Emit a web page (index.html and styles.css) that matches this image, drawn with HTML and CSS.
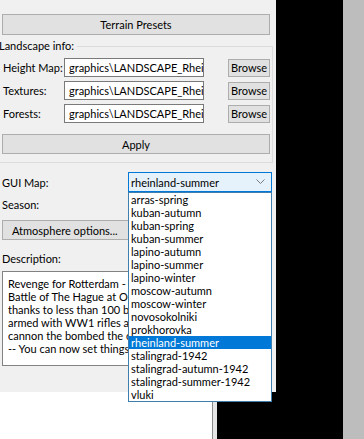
FILE: index.html
```html
<!DOCTYPE html>
<html>
<head>
  <title>Landscape settings</title>
  <link rel="stylesheet" href="styles.css">
</head>
<body>
  <div class="screen">
    <div class="left">
      <div class="panel">
        <button type="button" class="btn wide presets">Terrain Presets</button>

        <div class="group">
          <div class="legend">Landscape info:</div>
          <div class="row">
            <label>Height Map:</label>
            <div class="field">graphics\LANDSCAPE_Rheinland\height.tga</div>
            <button type="button" class="btn browse">Browse</button>
          </div>
          <div class="row">
            <label>Textures:</label>
            <div class="field">graphics\LANDSCAPE_Rheinland\textures.ini</div>
            <button type="button" class="btn browse">Browse</button>
          </div>
          <div class="row">
            <label>Forests:</label>
            <div class="field">graphics\LANDSCAPE_Rheinland\forests.tga</div>
            <button type="button" class="btn browse">Browse</button>
          </div>
          <button type="button" class="btn wide apply">Apply</button>
        </div>

        <div class="combo-row">
          <label>GUI Map:</label>
          <div class="combo">
            <span class="combo-text">rheinland-summer</span>
            <svg class="chevron" width="9" height="6" viewBox="0 0 9 6"><path d="M0.5 0.5 L4.5 4.5 L8.5 0.5" fill="none" stroke="#7a7a7a" stroke-width="1"/></svg>
            <ul class="list">
              <li>arras-spring</li>
              <li>kuban-autumn</li>
              <li>kuban-spring</li>
              <li>kuban-summer</li>
              <li>lapino-autumn</li>
              <li>lapino-summer</li>
              <li>lapino-winter</li>
              <li>moscow-autumn</li>
              <li>moscow-winter</li>
              <li>novosokolniki</li>
              <li>prokhorovka</li>
              <li class="selected">rheinland-summer</li>
              <li>stalingrad-1942</li>
              <li>stalingrad-autumn-1942</li>
              <li>stalingrad-summer-1942</li>
              <li>vluki</li>
            </ul>
          </div>
        </div>

        <div class="label season">Season:</div>
        <button type="button" class="btn atmos">Atmosphere options...</button>
        <div class="label desc-label">Description:</div>
        <div class="desc">
          <div>Revenge for Rotterdam - the Luftwaffe's first defeat.</div>
          <div>Battle of The Hague at Ockenburg, Ypenburg and Valkenburg</div>
          <div>thanks to less than 100 battle-ready Dutch fighters, soldiers</div>
          <div>armed with WW1 rifles and a few anti-aircraft guns. The</div>
          <div>cannon the bombed the city in return, many died.</div>
          <div>-- You can now set things up in the mission editor.</div>
        </div>
      </div>
      <div class="bottom">
        <div class="white"></div>
        <div class="edge"></div>
      </div>
    </div>
    <div class="black"></div>
    <div class="strip"></div>
  </div>
</body>
</html>
```

FILE: styles.css
```css
body {
  margin: 0;
  padding: 0;
  background-color: #000000;
  font-family: Lato, "Liberation Sans", sans-serif;
  font-size: 11px;
  color: #000000;
  overflow: hidden;
}

.screen {
  display: flex;
  width: 364px;
  height: 439px;
  overflow: hidden;
}

.left {
  width: 276px;
  display: flex;
  flex-direction: column;
  position: relative;
  z-index: 1;
}

.panel {
  height: 392px;
  flex: none;
  background-color: #f0f0f0;
  padding-top: 14px;
  box-sizing: border-box;
}

.bottom {
  flex: 1;
  display: flex;
}

.bottom .white {
  width: 212px;
  background-color: #ffffff;
  border-right: 1px solid #8c8c8c;
}

.bottom .edge {
  width: 4px;
  background-color: #e6e6e6;
}

.black {
  flex: 1;
  background-color: #000000;
}

.strip {
  width: 21px;
  background-color: #bdbdbd;
}

.btn {
  display: block;
  background-color: #e1e1e1;
  border: 1px solid #adadad;
  font-family: inherit;
  font-size: 11px;
  color: #000000;
  padding: 0;
  margin: 0;
  box-sizing: border-box;
}

.wide {
  width: 268px;
  height: 21px;
  margin-left: 2px;
}

.group {
  margin-top: 11px;
  margin-left: -12px;
  width: 285px;
  box-sizing: border-box;
  border: 1px solid #dcdcdc;
  padding-bottom: 8px;
}

.legend {
  width: fit-content;
  height: 16px;
  margin-top: -9px;
  margin-left: 10px;
  padding-right: 3px;
  line-height: 16px;
  background-color: #f0f0f0;
}

.row {
  display: flex;
  align-items: center;
  height: 19px;
  margin-top: 4px;
  padding-left: 14px;
}

.row label {
  width: 61px;
  white-space: nowrap;
}

.field {
  width: 140px;
  height: 19px;
  box-sizing: border-box;
  border: 1px solid #7a7a7a;
  background-color: #ffffff;
  padding-left: 4px;
  line-height: 17px;
  white-space: nowrap;
  overflow: hidden;
}

.browse {
  width: 42px;
  height: 18px;
  margin-left: 24px;
}

.apply {
  margin-top: 11px;
  margin-left: 13px;
  height: 20px;
}

.combo-row {
  display: flex;
  align-items: center;
  margin-top: 9px;
  padding-left: 2px;
}

.combo-row label {
  width: 126px;
}

.combo {
  position: relative;
  width: 144px;
  height: 20px;
  box-sizing: border-box;
  border: 1px solid #0078d7;
  background-color: #e5f1fb;
  display: flex;
  align-items: center;
  padding-left: 2px;
}

.combo-text {
  flex: 1;
}

.chevron {
  margin-right: 6px;
}

.list {
  position: absolute;
  top: 19px;
  left: -1px;
  width: 144px;
  margin: 0;
  padding: 0;
  list-style: none;
  background-color: #ffffff;
  border: 1px solid #3f7fb0;
  box-sizing: border-box;
  z-index: 2;
}

.list li {
  height: 13px;
  line-height: 13px;
  padding-left: 2px;
  white-space: nowrap;
}

.list li.selected {
  background-color: #0078d7;
  color: #ffffff;
}

.label {
  line-height: 16px;
  padding-left: 2px;
}

.season {
  margin-top: 5px;
}

.atmos {
  margin-top: 7px;
  margin-left: 2px;
  width: 132px;
  height: 20px;
  text-align: left;
  padding-left: 9px;
}

.desc-label {
  margin-top: 11px;
}

.desc {
  margin-top: 4px;
  margin-left: 2px;
  width: 268px;
  height: 95px;
  box-sizing: border-box;
  border: 1px solid #828282;
  background-color: #ffffff;
  padding: 5px 0 0 5px;
  line-height: 13px;
  white-space: nowrap;
  overflow: hidden;
}
```
